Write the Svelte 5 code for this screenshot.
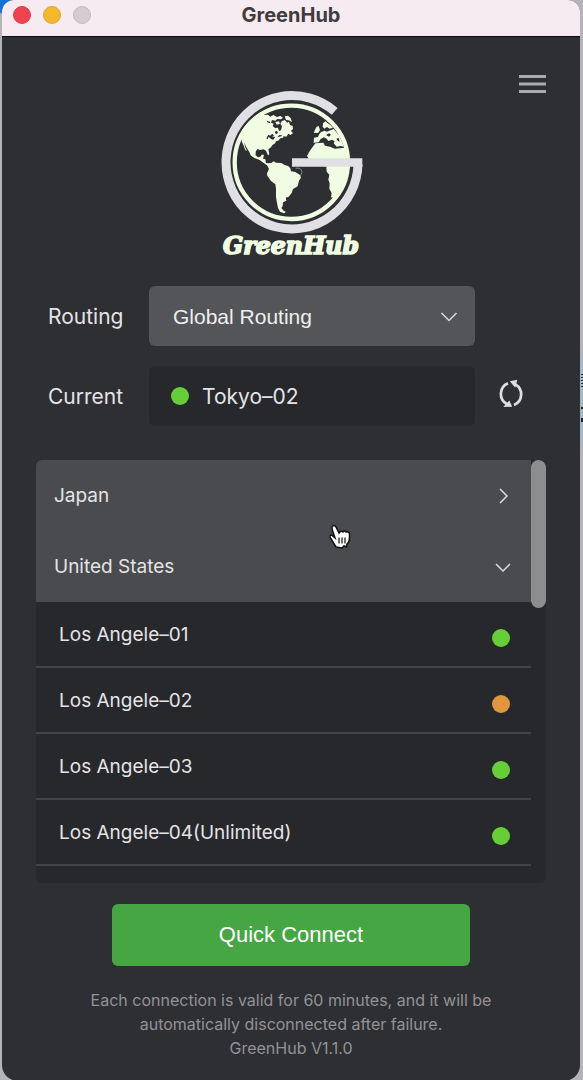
<script>
    let routing = $state('Global Routing');
    let open = $state({ Japan: false, 'United States': true });

    const regions = [
        { name: 'Japan', servers: [] },
        {
            name: 'United States',
            servers: [
                { name: 'Los Angele–01', status: 'good' },
                { name: 'Los Angele–02', status: 'busy' },
                { name: 'Los Angele–03', status: 'good' },
                { name: 'Los Angele–04(Unlimited)', status: 'good' }
            ]
        }
    ];
</script>

<div class="desktop">
    <div class="window">
        <header class="titlebar">
            <div class="lights">
                <button type="button" class="light close" aria-label="Close"></button>
                <button type="button" class="light minimize" aria-label="Minimize"></button>
                <button type="button" class="light zoom" aria-label="Zoom" disabled></button>
            </div>
            <h1>GreenHub</h1>
        </header>

        <main>
            <div class="top">
                <svg class="logo" viewBox="27 26 432 510" role="img" aria-label="GreenHub">
                    <circle cx="244" cy="246" r="170" fill="none" stroke="#f0fde3" stroke-width="13" />
                    <g fill="#f0fde3">
                        <!-- North and Central America -->
                        <path d="M160 104 L174 103 L181 109 L190 104 L201 110 L211 107 L219 112 L213 117 L202 116 L196 121 L186 119 L183 127 L191 130 L188 137 L195 143 L204 142 L207 152 L213 150 L216 138 L211 130 L215 123 L224 119 L232 127 L237 124 L240 134 L248 137 L249 146 L243 151 L249 159 L241 164 L235 160 L229 169 L221 168 L218 173 L211 174 L205 181 L199 182 L194 190 L188 193 L183 201 L175 207 L178 222 L174 225 L168 211 L161 207 L151 209 L142 206 L137 214 L137 225 L144 231 L151 229 L155 223 L162 223 L159 235 L166 237 L168 248 L177 250 L183 247 L181 254 L170 254 L158 246 L149 239 L133 233 L122 225 L118 215 L108 199 L103 186 L105 199 L111 212 L106 209 L100 194 L95 183 L94 163 L79 188 Q94 139 130 111 L153 94Z" />
                        <path d="M196 125 L207 123 L210 130 L200 133Z M224 108 L234 106 L242 113 L246 125 L236 120 L228 119Z" />
                        <!-- South America -->
                        <path d="M168 249 L183 249 L191 243 L198 247 L214 248 L224 254 L234 257 L241 264 L243 273 L256 275 L270 284 L273 292 L267 301 L263 318 L249 326 L245 338 L236 349 L227 352 L229 361 L219 366 L218 378 L214 383 L221 391 L228 395 L222 399 L210 394 L204 383 L201 368 L198 351 L198 325 L196 312 L183 302 L172 286 L171 279 L177 266Z" />
                        <!-- Europe -->
                        <path d="M339 128 L347 123 L352 128 L361 134 L369 142 L359 145 L351 140 L343 145 L338 139Z M320 139 L326 137 L330 149 L325 157 L312 158 L314 150Z M333 155 L344 151 L350 154 L371 146 L388 166 L397 187 L401 199 L391 197 L380 199 L371 189 L374 183 L366 178 L355 182 L350 175 L342 171 L332 176 L326 186 L311 187 L312 172 L324 170 L328 161Z" />
                        <!-- Africa -->
                        <path d="M316 189 L340 187 L345 196 L360 199 L374 205 L405 202 Q424 249 405 304 Q392 332 371 352 L363 351 L365 339 L358 325 L359 309 L355 298 L358 283 L350 274 L349 258 L327 257 L310 251 L300 241 L291 227 L297 216 L304 205Z" />
                    </g>
                    <path d="M169 174 L175 163 L180 166 L187 160 L192 166 L186 170 L196 169 L190 178 L183 176 L176 169 L173 177Z M194 155 L201 151 L204 158 L198 162Z M170 121 L180 124 L181 129 L172 126Z M348 164 L357 159 L363 163 L357 169Z M379 175 L386 173 L389 184 L383 181Z M202 171 L208 164 L216 165 L214 168Z" fill="#2e2f33" />
                    <path d="M257 264 Q274 260 276 276 L269 291" fill="none" stroke="#aeb3a9" stroke-width="2" />
                    <path d="M374 93 A198 200 0 1 0 444 252" fill="none" stroke="#e0dfe3" stroke-width="27" />
                    <path d="M246 234H457V259H246Z" fill="#e0dfe3" />
                    <text x="243" y="522" text-anchor="middle">GreenHub</text>
                </svg>
                <button type="button" class="icon-button menu" aria-label="Menu">
                    <svg width="27" height="20" viewBox="0 0 27 20">
                        <path d="M0 2.500H27M0 10H27M0 17.500H27" stroke="#a9aaad" stroke-width="3" />
                    </svg>
                </button>
            </div>

            <div class="settings">
                <label for="routing">Routing</label>
                <div class="select-wrap">
                    <select id="routing" bind:value={routing}>
                        <option>Global Routing</option>
                    </select>
                    <svg class="select-arrow" width="18" height="10" viewBox="0 0 18 10">
                        <path d="M1.500 1 L9 8.500 L16.500 1" />
                    </svg>
                </div>

                <label class="second" for="current">Current</label>
                <output id="current" class="current">
                    <span class="dot good"></span>
                    Tokyo–02
                </output>
                <button type="button" class="icon-button refresh" aria-label="Refresh">
                    <svg width="28" height="30" viewBox="0 0 28 30">
                        <g fill="none" stroke="#dedee0" stroke-width="2.700">
                            <path d="M11 4.300 A11.500 11.500 0 0 0 9.800 25" />
                            <path d="M17 25.900 A11.500 11.500 0 0 0 18.400 5.300" />
                        </g>
                        <path d="M12.800 2.200 L20.300 0.800 L18.300 8.700Z M15.200 27.800 L6.300 28 L12.300 21.600Z" fill="#dedee0" />
                    </svg>
                </button>
            </div>

            <section class="servers">
                <div class="list">
                    {#each regions as region}
                        <button
                            type="button"
                            class="region"
                            aria-expanded={open[region.name]}
                            onclick={() => (open[region.name] = !open[region.name])}
                        >
                            {region.name}
                            <svg class:expanded={open[region.name]} width="16" height="16" viewBox="0 0 16 16">
                                <path d="M5 1 L12 8 L5 15" />
                            </svg>
                        </button>
                        {#if open[region.name]}
                            {#each region.servers as server}
                                <button type="button" class="server">
                                    {server.name}
                                    <span class="dot {server.status}"></span>
                                </button>
                            {/each}
                        {/if}
                    {/each}
                </div>
                <div class="track"><div class="thumb"></div></div>

                <svg class="pointer" width="24" height="26" viewBox="0 0 24 26">
                    <path
                        d="M4 3 Q6 0 8 3 L11 9 Q13 6 15 8 Q17 6 18 8 Q21 7 21.500 10 Q22 18 19 20 L18.500 23 L16 22 L14 24 L8 23 L2.500 14 Q1 11 3.500 11 L7 14 L4 5Z"
                        fill="#fff"
                        stroke="#111"
                        stroke-width="1.500"
                    />
                    <path d="M11 13.500V19.500M14 13.500V19.500M17 13.500V19.500" stroke="#111" stroke-width="1.200" />
                </svg>
            </section>

            <button type="button" class="connect">Quick Connect</button>

            <footer>
                <p>Each connection is valid for 60 minutes, and it will be automatically disconnected after failure.</p>
                <p>GreenHub V1.1.0</p>
            </footer>
        </main>
    </div>
</div>

<style>
    :global(body) {
        margin: 0;
        background: #b4b3b8;
    }

    .desktop {
        box-sizing: border-box;
        min-height: 100vh;
        padding: 0 3px 1px 2px;
        display: flex;
        background:
            linear-gradient(#1473d2 12px, #b4b3b8 14px) left / 20px 100% no-repeat,
            linear-gradient(#222 0 0) right 407px / 2px 2px no-repeat,
            linear-gradient(#222 0 0) right 418px / 2px 4px no-repeat,
            repeating-linear-gradient(#333 0 1px, #9fb9c9 1px 3px) right 374px / 2px 15px no-repeat,
            linear-gradient(#b4b3b8 350px, #9fb9c9 370px, #9fb9c9 430px, #b4b3b8 450px);
        font-family: Inter, 'Noto Sans', sans-serif;
        font-size: 21px;
        color: #e4e4e6;
    }

    .window {
        flex: 1;
        min-width: 0;
        overflow: hidden;
        border-radius: 12px 12px 16px 16px;
        background: #2e2f33;
    }

    button {
        padding: 0;
        border: none;
        background: none;
        color: inherit;
        font: inherit;
        cursor: pointer;
    }

    .titlebar {
        display: grid;
        grid-template-columns: 1fr auto 1fr;
        align-items: center;
        box-sizing: border-box;
        height: 37px;
        padding: 0 11px 7px;
        border-bottom: 1px solid #0c0c0e;
        background: #f6ebf1;
    }

    .lights {
        display: flex;
        gap: 12px;
    }

    .light {
        box-sizing: border-box;
        width: 18px;
        height: 18px;
        border-radius: 50%;
    }

    .close {
        border: 1px solid #dc3d48;
        background: #ee4450;
    }

    .minimize {
        border: 1px solid #e0a52c;
        background: #f5b72e;
    }

    .zoom {
        border: 1px solid #c2b9be;
        background: #d6cbd1;
    }

    h1 {
        margin: 0;
        color: #413b3f;
        font-size: 20px;
        font-weight: 700;
        line-height: 24px;
    }

    main {
        padding: 37px 34px 21px;
    }

    .top {
        display: grid;
        grid-template-columns: 1fr auto 1fr;
        align-items: start;
    }

    .logo {
        display: block;
        grid-column: 2;
        width: 144px;
        height: 170px;
        margin-top: 15px;
    }

    .logo text {
        fill: #f0fde3;
        stroke: #f0fde3;
        stroke-width: 5px;
        font-family: 'DejaVu Serif', serif;
        font-size: 71px;
        font-style: italic;
        font-weight: 700;
    }

    .menu {
        justify-self: end;
    }

    .icon-button svg {
        display: block;
    }

    .settings {
        display: grid;
        grid-template-columns: 101px 1fr 71px;
        align-items: center;
        row-gap: 20px;
        margin-top: 27px;
        padding-left: 12px;
    }

    .select-wrap {
        position: relative;
    }

    select,
    .current {
        box-sizing: border-box;
        width: 100%;
        height: 60px;
        border-radius: 6px;
    }

    select {
        display: block;
        appearance: none;
        padding: 0 50px 0 24px;
        border: none;
        background: #545558;
        color: #eeeeef;
        font-family: 'Liberation Sans', Arial, sans-serif;
        font-size: 21px;
    }

    .select-arrow {
        position: absolute;
        top: 26px;
        right: 17px;
        pointer-events: none;
    }

    .select-arrow path,
    .region path {
        fill: none;
        stroke: #dcdcde;
        stroke-width: 1.5px;
    }

    .current {
        display: flex;
        align-items: center;
        gap: 13px;
        padding-left: 22px;
        background: #27282c;
    }

    label.second {
        grid-column: 1;
    }

    .refresh {
        justify-self: center;
        margin-bottom: 5px;
    }

    .dot {
        flex: none;
        width: 18px;
        height: 18px;
        border-radius: 50%;
    }

    .good {
        background: #66cf38;
    }

    .busy {
        background: #df963f;
    }

    .servers {
        position: relative;
        display: grid;
        grid-template-columns: 1fr 15px;
        height: 423px;
        margin-top: 34px;
        overflow: hidden;
        border-radius: 6px;
        background: #27282c;
        font-size: 19px;
    }

    .list {
        overflow-y: auto;
        scrollbar-width: none;
    }

    .region,
    .server {
        display: flex;
        align-items: center;
        justify-content: space-between;
        box-sizing: border-box;
        width: 100%;
        text-align: left;
    }

    .region {
        height: 71px;
        padding: 0 20px 0 18px;
        background: #4a4b4e;
    }

    .expanded {
        transform: rotate(90deg);
    }

    .server {
        height: 66px;
        padding: 0 21px 0 23px;
        border-bottom: 2px solid #434447;
    }

    .server .dot {
        margin-top: 8px;
    }

    .thumb {
        height: 148px;
        border-radius: 8px;
        background: #8c8d8f;
    }

    .pointer {
        position: absolute;
        top: 64px;
        left: 292px;
    }

    .connect {
        display: block;
        width: calc(100% - 152px);
        height: 62px;
        margin: 21px auto 22px;
        border-radius: 6px;
        background: #45a643;
        color: #fff;
        font-family: 'Liberation Sans', Arial, sans-serif;
        font-size: 22px;
    }

    footer {
        padding: 0 44px;
        color: #929396;
        font-size: 16px;
        line-height: 24px;
        text-align: center;
    }

    p {
        margin: 0;
    }
</style>
